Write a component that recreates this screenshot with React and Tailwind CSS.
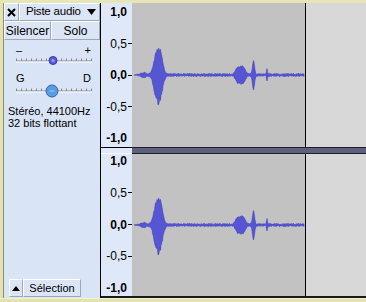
import React from "react";

function rng(seed) {
  let s = seed;
  return () => {
    s = (s * 1103515245 + 12345) & 0x7fffffff;
    return s / 0x7fffffff;
  };
}

function makeWave(zero, seed) {
  const r = rng(seed);
  const top = [];
  const bot = [];
  for (let x = 134; x <= 304; x += 0.5) {
    const ramp = x < 140 ? (x - 134) / 6 : 1;
    const n1 = ramp * (0.5 + r() * 1.1);
    const n2 = ramp * (0.5 + r() * 1.1);
    const d1 = Math.abs((x - 158.3) / 5.0);
    const g1 = Math.exp(-Math.pow(d1, 2.4));
    const b1t = 27 * g1 * (0.82 + 0.22 * r());
    const b1b = 28 * g1 * (0.82 + 0.22 * r());
    const b2 = 7.5 * Math.exp(-Math.pow((x - 240.5) / 5.5, 4));
    const b3 = 13 * Math.exp(-Math.pow((x - 253.5) / 1.4, 2));
    const b4 = 5 * Math.exp(-Math.pow((x - 267) / 0.6, 2));
    const b5 = 1.5 * Math.exp(-Math.pow((x - 144) / 3, 2));
    const t = n1 + b1t + b2 * (0.9 + 0.2 * r()) + b3 + b4 + b5;
    const b = n2 + b1b + b2 * (0.9 + 0.2 * r()) + b3 * 1.05 + b4 + b5;
    top.push([x - 132, zero - t]);
    bot.push([x - 132, zero + b]);
  }
  const pts = top.concat(bot.reverse());
  return "M" + pts.map((p) => p[0].toFixed(1) + " " + p[1].toFixed(1)).join(" L") + " Z";
}

const WAVE1 = makeWave(72, 12345);
const WAVE2 = makeWave(71, 12345);

const FONT = { fontFamily: '"Liberation Sans", Arial, sans-serif' };

function RulerLabel({ text, bold, tick }) {
  return (
    <div className="flex items-center justify-end h-[14px]">
      <span className={"text-[12px] leading-[14px] text-black " + (bold ? "font-bold" : "")}>{text}</span>
      <span className={"ml-[1px] w-[4px] h-[1px] " + (tick ? "bg-black" : "bg-transparent")} />
    </div>
  );
}

function Ruler({ h, pt, pb }) {
  return (
    <div className={"w-[31px] bg-[#dfe8f8] flex flex-col justify-between " + h + " " + pt + " " + pb}>
      <RulerLabel text="1,0" bold />
      <RulerLabel text="0,5" tick />
      <RulerLabel text="0,0" bold tick />
      <RulerLabel text="-0,5" tick />
      <RulerLabel text="-1,0" bold />
    </div>
  );
}

function WaveArea({ h, height, d }) {
  return (
    <div className={"flex-1 flex " + h}>
      <div className="w-[173px] bg-[#c2c2c2]">
        <svg width="173" height={height} viewBox={`0 0 173 ${height}`}>
          <path d={d} fill="#5656d4" stroke="#3434bc" strokeWidth="0.5" />
        </svg>
      </div>
      <div className="w-[1px] bg-black" />
      <div className="flex-1 bg-[#d8d8d8]" />
    </div>
  );
}

const BTN = "border border-t-white border-l-white border-b-[#9ea7b8] border-r-[#9ea7b8] bg-[#dbe5f6]";

function Slider({ h, lineY, cx, big }) {
  const ticks = [];
  for (let x = 12; x <= 88; x += 5) ticks.push(x);
  return (
    <svg width="96" height={h} viewBox={`0 0 96 ${h}`} className="block">
      <line x1="12" y1={lineY} x2="88" y2={lineY} stroke="#8a8a8a" strokeWidth="1" />
      <line x1="12" y1={lineY + 1} x2="88" y2={lineY + 1} stroke="#ffffff" strokeWidth="1" />
      {ticks.map((x) => (
        <line key={x} x1={x + 0.5} y1={lineY - 2.5} x2={x + 0.5} y2={lineY} stroke="#8a8a8a" strokeWidth="1" />
      ))}
      {big ? (
        <g>
          <circle cx={cx} cy={lineY} r="6" fill="#5b9ce2" stroke="#2f62a6" strokeWidth="1" />
          <line x1={cx - 2.5} y1={lineY} x2={cx + 2.5} y2={lineY} stroke="#a8ccf2" strokeWidth="1" />
        </g>
      ) : (
        <g>
          <circle cx={cx} cy={lineY - 0.5} r="4" fill="#5a5ad8" stroke="#3a3aa8" strokeWidth="1" />
          <circle cx={cx} cy={lineY - 0.5} r="1.5" fill="#9a9af0" />
        </g>
      )}
    </svg>
  );
}

export default function App() {
  return (
    <div className="w-[366px] h-[302px] bg-[#e3e3b2] overflow-hidden flex flex-col text-black" style={FONT}>
      <div className="h-[3px] bg-[#e6e6b8] shrink-0" />
      <div className="flex h-[295px] shrink-0">
        <div className="w-[3px] bg-[#e3e3b2]" />
        <div className="w-[98px] bg-[#d9e4f7] border-l border-l-[#8c8c6c] border-r border-r-black flex flex-col">
          <div className="flex h-[18px]">
            <div className={"w-[15px] flex items-center justify-center " + BTN}>
              <svg width="9" height="9" viewBox="0 0 9 9">
                <path d="M1 1 L8 8 M8 1 L1 8" stroke="#000" strokeWidth="2" />
              </svg>
            </div>
            <div className={"flex-1 flex items-center pl-[6px] pr-[3px] " + BTN}>
              <span className="text-[11.5px] leading-none flex-1 tracking-[-0.2px]">Piste audio</span>
              <svg width="9" height="6" viewBox="0 0 9 6">
                <path d="M0 0 L9 0 L4.5 6 Z" fill="#000" />
              </svg>
            </div>
          </div>
          <div className="flex h-[19px]">
            <div className={"w-[47px] flex items-center justify-center " + BTN}>
              <span className="text-[12px] leading-none">Silencer</span>
            </div>
            <div className={"flex-1 flex items-center justify-center " + BTN}>
              <span className="text-[12px] leading-none">Solo</span>
            </div>
          </div>
          <div className="h-[4px]" />
          <div className="flex justify-between pl-[12px] pr-[9px] h-[12px] text-[11px] leading-[12px]">
            <span>–</span>
            <span>+</span>
          </div>
          <Slider h={10} lineY={5} cx={49} />
          <div className="h-[6px]" />
          <div className="flex justify-between pl-[12px] pr-[9px] h-[12px] text-[11px] leading-[12px]">
            <span>G</span>
            <span>D</span>
          </div>
          <Slider h={14} lineY={7} cx={48} big />
          <div className="h-[7px]" />
          <div className="pl-[4px] text-[11px] leading-[12px]">
            <div>Stéréo, 44100Hz</div>
            <div>32 bits flottant</div>
          </div>
          <div className="flex-1" />
          <div className="flex h-[18px] pl-[5px] mb-[1px]">
            <div className={"w-[14px] flex items-center justify-center " + BTN}>
              <svg width="8" height="5" viewBox="0 0 8 5">
                <path d="M0 5 L8 5 L4 0 Z" fill="#000" />
              </svg>
            </div>
            <div className={"w-[58px] flex items-center justify-center " + BTN}>
              <span className="text-[11px] leading-none">Sélection</span>
            </div>
          </div>
        </div>
        <div className="flex-1 flex flex-col">
          <div className="flex h-[144px]">
            <Ruler h="h-[144px]" pt="pt-[2px]" pb="pb-[2px]" />
            <WaveArea h="h-[144px]" height={144} d={WAVE1} />
          </div>
          <div className="flex h-[7px]">
            <div className="w-[31px] bg-[#dfe8f8] border-t border-t-black border-b border-b-white" />
            <div className="flex-1 bg-[#5d617f] border-t border-t-[#1e1e28] border-b border-b-[#1e1e28]" />
          </div>
          <div className="flex h-[142px]">
            <Ruler h="h-[142px]" pt="pt-[0px]" pb="pb-[1px]" />
            <WaveArea h="h-[142px]" height={142} d={WAVE2} />
          </div>
          <div className="h-[2px] bg-[#1a1a1a]" />
        </div>
      </div>
      <div className="flex-1 bg-[#e3e3b2] border-t border-t-[#f2f2cc]" />
    </div>
  );
}
